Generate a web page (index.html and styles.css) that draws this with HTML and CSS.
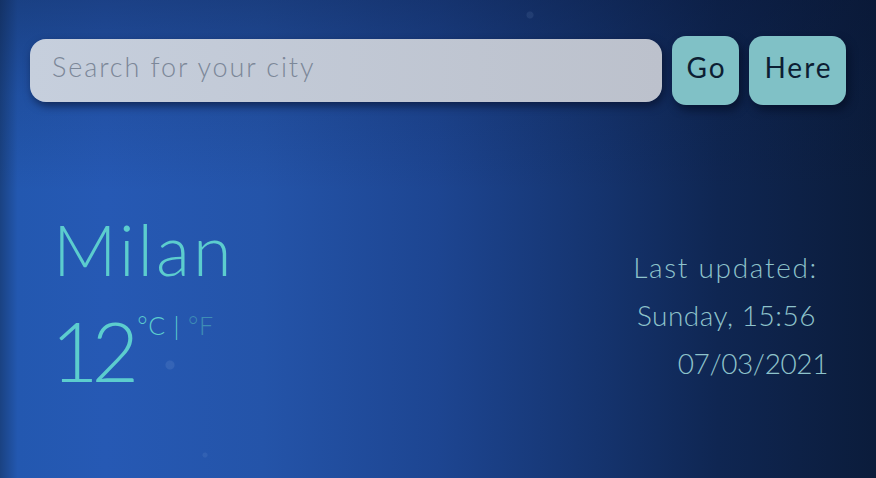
FILE: index.html
```html
<!DOCTYPE html>
<html lang="en">
<head>
<meta charset="utf-8">
<title>Weather</title>
<link rel="stylesheet" href="styles.css">
</head>
<body>
<div class="app">
  <form class="search-row">
    <input class="search-input" type="text" placeholder="Search for your city">
    <button class="btn btn-go" type="button">Go</button>
    <button class="btn btn-here" type="button">Here</button>
  </form>
  <div class="main">
    <div class="current">
      <h1 class="city">Milan</h1>
      <div class="temp-row">
        <span class="temp">12</span>
        <span class="units"><span class="unit-c">°C</span> <span class="sep">|</span> <span class="unit-f">°F</span></span>
      </div>
    </div>
    <div class="updated">
      <div class="upd-line l1">Last updated:</div>
      <div class="upd-line l2">Sunday, 15:56</div>
      <div class="upd-line l3">07/03/2021</div>
    </div>
  </div>
</div>
</body>
</html>
```
FILE: styles.css
```css
html, body {
  margin: 0;
  padding: 0;
  height: 100%;
}
body {
  font-family: "Lato", "Open Sans", sans-serif;
  font-weight: 300;
  background:
    radial-gradient(circle at 600px 45px, rgba(160,190,230,0.14) 0 3px, transparent 4px),
    radial-gradient(circle at 170px 365px, rgba(160,190,230,0.13) 0 4px, transparent 5px),
    radial-gradient(circle at 530px 15px, rgba(160,190,230,0.10) 0 3px, transparent 4px),
    radial-gradient(circle at 205px 455px, rgba(160,190,230,0.10) 0 2px, transparent 3px),
    linear-gradient(180deg, rgba(8,20,50,0.35) 0%, rgba(8,20,50,0.12) 20%, rgba(0,0,0,0) 40%),
    linear-gradient(90deg, #1a4282 0%, #2358b0 2%, #2659b4 12%, #2454a9 30%, #1d4591 50%, #15346f 68%, #0f2652 82%, #0b1c3b 100%);
  overflow: hidden;
}
.app {
  padding: 36px 30px 0 30px;
}
.search-row {
  display: flex;
  align-items: center;
  gap: 10px;
  margin: 0;
}
.search-input {
  flex: 1;
  height: 63px;
  box-sizing: border-box;
  border: none;
  border-radius: 16px;
  background: linear-gradient(90deg, #c6cfdd, #bcc1cc);
  padding: 0 22px 8px 22px;
  font-family: inherit;
  font-weight: 300;
  font-size: 27px;
  letter-spacing: 1.9px;
  color: #4a5566;
  box-shadow: 2px 4px 8px rgba(3,10,30,0.55);
  outline: none;
}
.search-input::placeholder {
  color: #7c8798;
}
.btn {
  height: 69px;
  box-sizing: border-box;
  border: none;
  border-radius: 14px;
  background: #80c1c6;
  color: #0d1e33;
  font-family: inherit;
  font-weight: 400;
  font-size: 28px;
  letter-spacing: 2px;
  padding: 0 0 8px 2px;
  box-shadow: 3px 5px 8px rgba(3,10,30,0.6);
}
.btn-go { width: 67px; }
.btn-here { width: 97px; }
.main {
  display: flex;
  justify-content: space-between;
  padding: 106px 18px 0 23px;
}
.city {
  margin: 0;
  font-weight: 300;
  font-size: 70px;
  letter-spacing: 3px;
  line-height: 76px;
  color: #5ccdce;
}
.temp-row {
  display: flex;
  align-items: flex-start;
  margin-top: 28px;
}
.temp {
  font-size: 82px;
  line-height: 70px;
  letter-spacing: -7px;
  margin-left: -2px;
  color: #5ccdce;
}
.units {
  font-size: 25px;
  line-height: 26px;
  margin-left: 5px;
  margin-top: -3px;
  color: #5ccdce;
  letter-spacing: 0.8px;
}
.unit-f { color: #3e8db5; }
.updated {
  display: flex;
  flex-direction: column;
  align-items: flex-end;
  padding-top: 32px;
  color: #8ec3cb;
  font-size: 28px;
  letter-spacing: 1.4px;
  line-height: 48px;
}
.l1 { margin-right: 10px; letter-spacing: 1.7px; }
.l2 { margin-right: 12px; letter-spacing: 0.5px; }
.l3 { margin-right: 0; letter-spacing: -0.4px; }
```
